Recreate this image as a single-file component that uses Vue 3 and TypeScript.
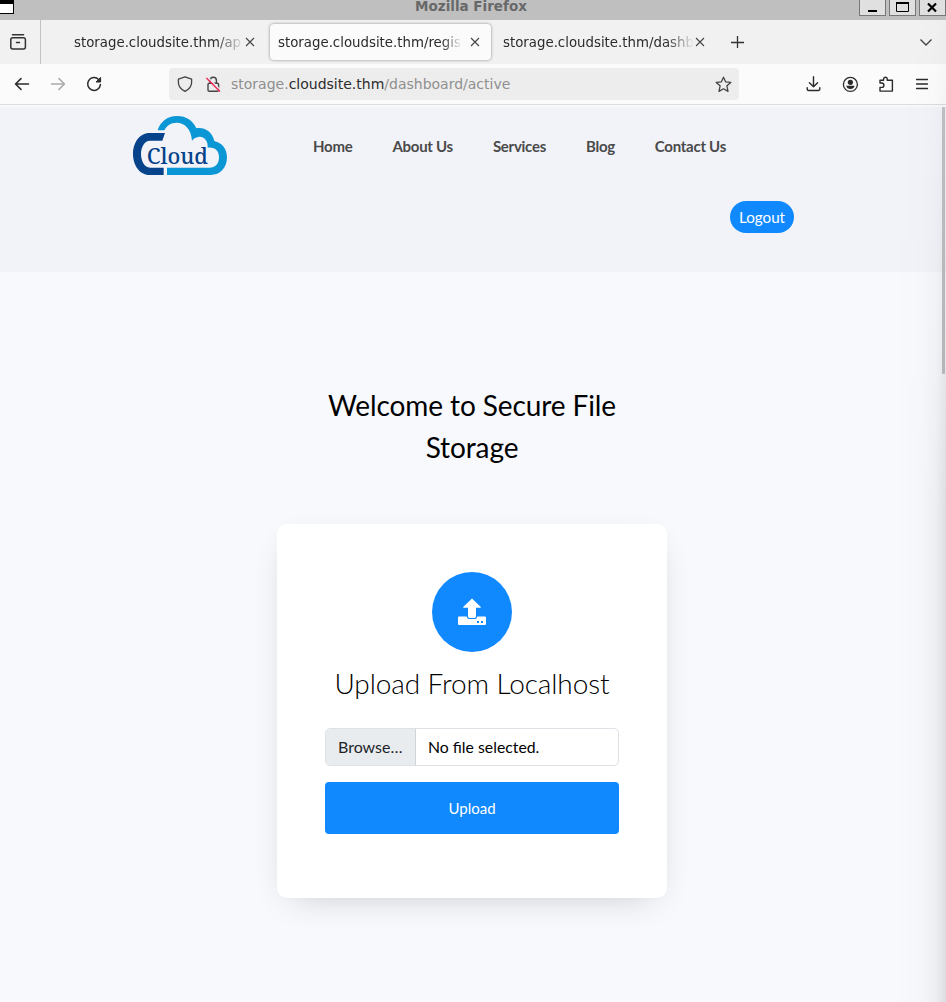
<script setup lang="ts">
interface Tab {
  title: string
  active: boolean
}

const tabs: Tab[] = [
  { title: 'storage.cloudsite.thm/ap', active: false },
  { title: 'storage.cloudsite.thm/regis', active: true },
  { title: 'storage.cloudsite.thm/dashb', active: false },
]

const links: string[] = ['Home', 'About Us', 'Services', 'Blog', 'Contact Us']
</script>

<template>
  <div class="window">
    <div class="titlebar">
      <span class="sysmenu"></span>
      <span class="caption">Mozilla Firefox</span>
      <div class="controls">
        <span class="control"><svg width="27" height="16"><path d="M9 11h9" stroke="#000" stroke-width="2" /></svg></span>
        <span class="control"><svg width="27" height="16"><path d="M7.5 2.5h12v9h-12z" fill="none" stroke="#000" /><path d="M7 3h13" stroke="#000" stroke-width="2" /></svg></span>
        <span class="control"><svg width="27" height="16"><path d="M9 3.5l8 8M17 3.5l-8 8" stroke="#000" stroke-width="2.2" /></svg></span>
      </div>
    </div>

    <div class="tabstrip">
      <div class="view">
        <svg width="18" height="18" viewBox="0 0 18 18" fill="none" stroke="#333" stroke-width="1.5" stroke-linecap="round">
          <path d="M3.5 1.8h11M7.5 9.5h3" />
          <rect x="1.8" y="4.8" width="14.6" height="11.2" rx="2" />
        </svg>
      </div>
      <div class="tabs">
        <div v-for="tab in tabs" :key="tab.title" class="tab" :class="{ active: tab.active }">
          <span class="tab-title">{{ tab.title }}</span>
          <svg class="close" width="10" height="10" viewBox="0 0 10 10"><path d="M1 1l8 8M9 1l-8 8" stroke="#444" stroke-width="1.1" /></svg>
        </div>
      </div>
      <svg class="plus" width="14" height="14"><path d="M7.5 1v12M1 7.5h13" stroke="#333" stroke-width="1.3" /></svg>
      <svg class="chevron" width="14" height="9" fill="none"><path d="M1.5 1.5L7 7l5.5-5.5" stroke="#444" stroke-width="1.4" /></svg>
    </div>

    <div class="toolbar">
      <div class="nav-icons">
        <svg width="16" height="16" fill="none" stroke="#2b2b2b" stroke-width="1.5" stroke-linecap="round" stroke-linejoin="round"><path d="M1.5 8h13M7 2.6L1.5 8 7 13.4" /></svg>
        <svg width="16" height="16" fill="none" stroke="#aaa" stroke-width="1.5" stroke-linecap="round" stroke-linejoin="round"><path d="M1.5 8h13M9 2.6L14.5 8 9 13.4" /></svg>
        <svg width="16" height="16" fill="none" stroke="#2b2b2b" stroke-width="1.5" stroke-linecap="round"><path d="M12.6 3.5A6.4 6.4 0 1 0 14.4 8.6" /><path d="M14.6 1.8v4.2h-4.2z" fill="#2b2b2b" stroke-width="1" stroke-linejoin="round" /></svg>
      </div>
      <div class="urlbar">
        <svg width="16" height="16" fill="none" stroke="#444" stroke-width="1.3" stroke-linejoin="round"><path d="M8 .8l6.6 2.4v3.2c0 4-2.6 6.8-6.6 9-4-2.2-6.6-5-6.6-9V3.2z" /></svg>
        <svg class="lock" width="16" height="16" fill="none" stroke="#444" stroke-width="1.4"><rect x="3" y="7.2" width="10.6" height="8" rx="1.3" /><path d="M5.2 7V4.4a3.1 3.1 0 0 1 6.2 0V7" /><path d="M3 1.5l12.5 12.5" stroke="#ededed" stroke-width="1.3" /><path d="M1.4 2l13.6 13.6" stroke="#ee2a58" stroke-width="1.4" /></svg>
        <span class="url">storage.<b>cloudsite.thm</b>/dashboard/active</span>
        <svg class="star" width="17" height="17" viewBox="0 0 17 17" fill="none" stroke="#444" stroke-width="1.3" stroke-linejoin="round"><path d="M8.5 1.2l2.1 4.6 5.2.6-3.9 3.4 1.1 5.6-4.5-2.6L4 15.4l1.1-5.6-3.9-3.4 5.2-.6z" /></svg>
      </div>
      <div class="tools">
        <svg width="16" height="16" fill="none" stroke="#2b2b2b" stroke-width="1.4" stroke-linecap="round" stroke-linejoin="round"><path d="M7.5.8v10M3.4 6.8l4.1 4 4.1-4M1.2 11.6v1.4a1.5 1.5 0 0 0 1.5 1.5h9.6a1.5 1.5 0 0 0 1.5-1.5v-1.4" /></svg>
        <svg width="16" height="16"><circle cx="8.4" cy="8.4" r="7" fill="none" stroke="#2b2b2b" stroke-width="1.3" /><circle cx="8.4" cy="6.3" r="2.6" fill="#2b2b2b" /><path d="M4.2 9.8h8.4c-.3 2-2 3.3-4.2 3.3s-3.9-1.3-4.2-3.3z" fill="#2b2b2b" /></svg>
        <svg width="16" height="16" fill="none" stroke="#2b2b2b" stroke-width="1.4" stroke-linejoin="round"><path d="M2 7V4.300h3.600V3a1.800 1.800 0 0 1 3.600 0v1.300h5.200v10.800H2V11.400h1.700a2.200 2.200 0 0 0 0-4.400z" /></svg>
        <svg width="16" height="16" fill="none" stroke="#2b2b2b" stroke-width="1.3" stroke-linecap="round"><path d="M2.5 3.5h11M2.5 8h11M2.5 12.5h11" /></svg>
      </div>
    </div>

    <div class="page">
      <header class="site-header">
        <svg class="logo" width="96" height="61" viewBox="36 30 288 183">
          <path d="M135 84H88C60 84 39 112 39 147S60 210 88 210h43v-22H90C74 188 63 168 63 147s11-40 27-40h37z" fill="#06438a" />
          <path d="M113 76C120 51 142 33 171 33c28 0 48 14 58 37 24-4 48 10 54 38 24 6 38 24 38 49 0 32-21 53-49 53H141v-22h127c18 0 29-11 29-31 0-19-11-31-34-29 2-22-13-35-28-32-9 1-15 6-19 11-2-35-22-54-46-54-18 0-30 9-37 23z" fill="#0b96d5" />
          <text x="80" y="176" textLength="184" lengthAdjust="spacingAndGlyphs">Cloud</text>
        </svg>
        <nav class="links">
          <a v-for="link in links" :key="link">{{ link }}</a>
        </nav>
        <a class="logout">Logout</a>
      </header>

      <main class="content">
        <h2>Welcome to Secure File Storage</h2>
        <section class="card">
          <div class="badge">
            <svg width="28" height="28" viewBox="0 0 28 28">
              <path d="M14 .5l8.6 8.3c.4.5.2 1-.4 1H18v8.4c0 1-.7 1.7-1.7 1.7h-4.6c-1 0-1.7-.7-1.7-1.7V9.8H5.8c-.6 0-.8-.5-.4-1z" fill="#fff" />
              <path d="M1.300 18.500h7.400c.3 1.700 1.400 2.600 3 2.600h4.600c1.600 0 2.700-.9 3-2.600h7.400c.8 0 1.300.5 1.300 1.300v5.900c0 .8-.5 1.300-1.300 1.300H1.300C.5 27 0 26.500 0 25.700v-5.900c0-.8.5-1.300 1.300-1.300z" fill="#fff" />
              <rect x="19" y="23" width="2" height="2" fill="#1089ff" /><rect x="23" y="23" width="2" height="2" fill="#1089ff" />
            </svg>
          </div>
          <h3>Upload From Localhost</h3>
          <div class="file">
            <span class="browse">Browse…</span>
            <span class="filename">No file selected.</span>
          </div>
          <button class="upload" type="button">Upload</button>
        </section>
      </main>
      <span class="scrollbar"></span>
    </div>
    <div class="edge"></div>
  </div>
</template>

<style>
body {
  margin: 0;
  overflow: hidden;
}
</style>

<style scoped>
.window {
  position: relative;
  display: flex;
  flex-direction: column;
  width: 946px;
  height: 1002px;
  overflow: hidden;
  font-family: "DejaVu Sans", sans-serif;
}
svg {
  display: block;
  flex: none;
}
.titlebar {
  display: flex;
  position: relative;
  height: 20px;
  background: #bfbfbf;
  justify-content: space-between;
}
.sysmenu {
  box-sizing: border-box;
  width: 14px;
  height: 14px;
  border: 1px solid #000;
  border-top-width: 4px;
  border-left: 0;
  background: #fff;
}
.caption {
  position: absolute;
  left: 0;
  width: 942px;
  top: 0;
  text-align: center;
  font-size: 13.5px;
  line-height: 12px;
  font-weight: bold;
  color: #686868;
}
.controls {
  display: flex;
  gap: 3px;
}
.control {
  box-sizing: border-box;
  width: 27px;
  height: 16px;
  background: #e0e0e0;
  border: 1px solid #777;
  border-top: 0;
}
.control svg {
  margin-left: -1px;
}
.tabstrip {
  display: flex;
  align-items: center;
  height: 44px;
  background: #f1f1f1;
}
.view {
  box-sizing: border-box;
  display: flex;
  align-items: center;
  width: 41px;
  height: 44px;
  padding-left: 9px;
  border-right: 1px solid #c2c2c2;
}
.tabs {
  display: flex;
  gap: 4px;
  margin-left: 4px;
}
.tab {
  box-sizing: border-box;
  display: flex;
  align-items: center;
  width: 221px;
  height: 36px;
  padding: 0 11px 0 8px;
  border-radius: 4px;
}
.tab:first-child {
  padding-left: 29px;
}
.tab.active {
  background: #fbfbfb;
  box-shadow: 0 0 3px rgba(0, 0, 0, 0.45);
}
.tab-title {
  flex: 1;
  overflow: hidden;
  white-space: nowrap;
  font-size: 13.33px;
  line-height: 20px;
  padding-top: 1px;
  color: #2b2b2b;
  margin-right: 8px;
  mask-image: linear-gradient(to left, transparent, #000 20px);
}
.tab:not(.active) .tab-title {
  margin-right: 1px;
  mask-image: linear-gradient(to left, transparent, #000 28px);
}
.plus {
  margin-left: 14px;
}
.chevron {
  margin-left: auto;
  margin-right: 13px;
}
.toolbar {
  box-sizing: border-box;
  display: flex;
  align-items: center;
  height: 41px;
  padding: 0 16px 0 14px;
  background: #fbfbfb;
  border-bottom: 1px solid #dcdcde;
}
.nav-icons {
  display: flex;
  gap: 20px;
}
.urlbar {
  box-sizing: border-box;
  display: flex;
  align-items: center;
  width: 570px;
  height: 32px;
  margin-left: 67px;
  padding: 0 7px 0 8px;
  border-radius: 4px;
  background: #ededed;
}
.lock {
  margin-left: 12px;
}
.url {
  margin-left: 10px;
  font-size: 14px;
  color: #8f8f8f;
}
.url b {
  font-weight: normal;
  color: #2b2b2b;
}
.star {
  margin-left: auto;
}
.tools {
  display: flex;
  gap: 20px;
  margin-left: auto;
}
.tools svg {
  overflow: visible;
}
.page {
  position: relative;
  flex: 1;
  background: #f8f9fd;
  font-family: Lato, sans-serif;
}
.site-header {
  box-sizing: border-box;
  display: grid;
  grid-template-columns: 96px 1fr;
  grid-template-rows: 86px 32px;
  height: 167px;
  padding: 8px 152px 0 132px;
  border-top: 2px solid #f8f9fb;
  background: #f2f3f8;
}
.logo text {
  font: 500 66px "Noto Serif", "DejaVu Serif", serif;
  fill: #06438a;
}
.links {
  display: flex;
  gap: 40px;
  height: 62px;
  align-items: center;
  margin-left: 85px;
  font-size: 15px;
  letter-spacing: -0.27px;
  font-weight: 700;
  color: #4a4a4a;
  white-space: nowrap;
}
.logout {
  grid-column: 2;
  justify-self: end;
  width: 64px;
  height: 32px;
  border-radius: 16px;
  background: #1089ff;
  color: #fff;
  text-align: center;
  font-size: 15.2px;
  line-height: 32px;
}
.content {
  display: flex;
  flex-direction: column;
  align-items: center;
  padding-right: 2px;
}
h2 {
  width: 330px;
  margin: 112px 0 56px;
  font-size: 28px;
  font-weight: 400;
  line-height: 42px;
  letter-spacing: -0.1px;
  text-align: center;
  color: #000;
}
.card {
  box-sizing: border-box;
  display: flex;
  flex-direction: column;
  align-items: center;
  width: 390px;
  height: 374px;
  padding: 48px;
  border-radius: 10px;
  background: #fff;
  box-shadow: 0 10px 34px -15px rgba(0, 0, 0, 0.24);
}
.badge {
  display: flex;
  align-items: center;
  justify-content: center;
  width: 80px;
  height: 80px;
  border-radius: 50%;
  background: #1089ff;
}
h3 {
  margin: 10px 0 24px;
  font-size: 28px;
  font-weight: 300;
  line-height: 42px;
  letter-spacing: -0.1px;
  white-space: nowrap;
  color: #000;
}
.file {
  box-sizing: border-box;
  display: flex;
  width: 294px;
  height: 38px;
  overflow: hidden;
  border: 1px solid #dee2e6;
  border-radius: 5px;
  font-size: 16px;
  line-height: 36px;
  color: #000;
}
.browse {
  box-sizing: border-box;
  width: 90px;
  padding-left: 12px;
  background: #e9ecef;
  border-right: 1px solid #ced4da;
  color: #212529;
}
.filename {
  padding-left: 12px;
  font-size: 15.8px;
}
.upload {
  width: 294px;
  height: 52px;
  margin-top: 16px;
  padding: 0;
  border: 0;
  border-radius: 4px;
  background: #1089ff;
  color: #fff;
  font: 400 15px Lato, sans-serif;
}
.scrollbar {
  position: absolute;
  top: 2px;
  right: 1px;
  width: 3px;
  height: 267px;
  border-radius: 1px;
  background: #c3c3c5;
}
.edge {
  position: absolute;
  top: 20px;
  right: 0;
  bottom: 0;
  width: 50px;
  background: linear-gradient(to right, transparent, rgba(0, 0, 0, 0.012) 50%, rgba(0, 0, 0, 0.045) 80%, rgba(0, 0, 0, 0.11));
  mask-image: linear-gradient(to bottom, rgba(0, 0, 0, 0.1), #000 500px);
}
</style>
